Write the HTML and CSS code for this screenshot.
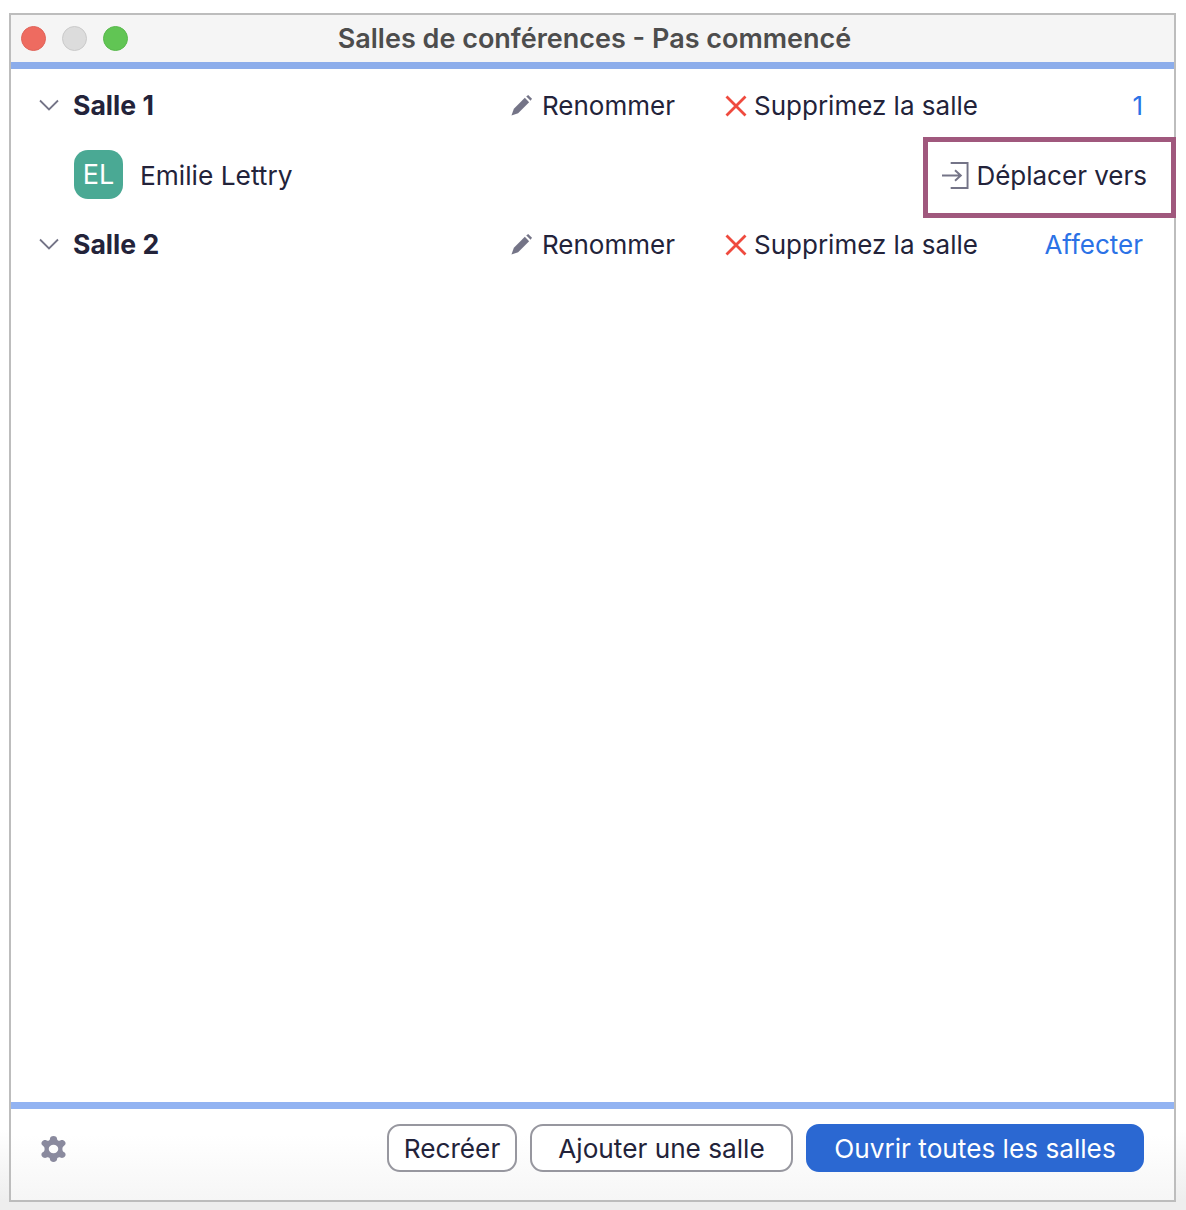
FILE: index.html
```html
<!DOCTYPE html>
<html lang="fr">
<head>
    <meta charset="UTF-8">
    <title>Salles de conférences</title>
    <link rel="stylesheet" href="styles.css">
</head>
<body>
    <div class="window">
        <div class="titlebar">
            <div class="lights">
                <span class="light red"></span>
                <span class="light grey"></span>
                <span class="light green"></span>
            </div>
            <div class="title">Salles de conférences - Pas commencé</div>
        </div>

        <div class="rooms">
            <!-- Salle 1 -->
            <div class="room-row">
                <svg class="chevron" viewBox="0 0 20 12"><path d="M1 1.5 L10 10.5 L19 1.5"/></svg>
                <div class="room-name">Salle 1</div>
                <div class="action rename">
                    <svg class="pencil" viewBox="0 0 22 22"><path d="M0.5 21.5 L3 14.5 L14.5 3 L19 7.5 L7.5 19 Z"/><path d="M16 1.5 L18 0 L22 4 L20.500 6 Z"/></svg>
                    <span>Renommer</span>
                </div>
                <div class="action delete">
                    <svg class="cross" viewBox="0 0 22 22"><path d="M1.500 1.500 L20.500 20.500 M20.500 1.500 L1.500 20.500"/></svg>
                    <span>Supprimez la salle</span>
                </div>
                <div class="room-link">1</div>
            </div>

            <div class="member-row">
                <div class="avatar">EL</div>
                <div class="member-name">Emilie Lettry</div>
                <div class="move">
                    <svg class="move-icon" viewBox="0 0 28 28"><path d="M9 1 H26.500 V27 H9 M0 14 H19 M13.500 8.500 L19.500 14 L13.500 19.500"/></svg>
                    <span>Déplacer vers</span>
                </div>
                <div class="highlight"></div>
            </div>

            <!-- Salle 2 -->
            <div class="room-row">
                <svg class="chevron" viewBox="0 0 20 12"><path d="M1 1.500 L10 10.500 L19 1.500"/></svg>
                <div class="room-name">Salle 2</div>
                <div class="action rename">
                    <svg class="pencil" viewBox="0 0 22 22"><path d="M0.500 21.500 L3 14.500 L14.500 3 L19 7.500 L7.500 19 Z"/><path d="M16 1.500 L18 0 L22 4 L20.500 6 Z"/></svg>
                    <span>Renommer</span>
                </div>
                <div class="action delete">
                    <svg class="cross" viewBox="0 0 22 22"><path d="M1.500 1.500 L20.500 20.500 M20.500 1.500 L1.500 20.500"/></svg>
                    <span>Supprimez la salle</span>
                </div>
                <div class="room-link">Affecter</div>
            </div>
        </div>

        <div class="footer">
            <svg class="gear" viewBox="2.500 0.500 21 25" preserveAspectRatio="none">
                <path fill-rule="evenodd" d="M13 0.500 C14.800 0.500 16 1.700 16 3.300 C16 4.700 17.500 5.500 18.700 4.800 C20.100 4 21.800 4.500 22.700 6 C23.600 7.500 23.100 9.200 21.700 10 C20.500 10.700 20.500 12.300 20.500 13 C20.500 13.700 20.500 15.300 21.700 16 C23.100 16.800 23.600 18.500 22.700 20 C21.800 21.500 20.100 22 18.700 21.200 C17.500 20.500 16 21.300 16 22.700 C16 24.300 14.800 25.500 13 25.500 C11.200 25.500 10 24.300 10 22.700 C10 21.300 8.500 20.500 7.300 21.200 C5.900 22 4.200 21.500 3.300 20 C2.400 18.500 2.900 16.800 4.300 16 C5.500 15.300 5.500 13.700 5.500 13 C5.500 12.300 5.500 10.700 4.300 10 C2.900 9.200 2.400 7.500 3.300 6 C4.200 4.500 5.900 4 7.300 4.800 C8.500 5.500 10 4.700 10 3.300 C10 1.700 11.200 0.500 13 0.500 Z M13 9 A4 4 0 1 0 13 17 A4 4 0 1 0 13 9 Z"/>
            </svg>
            <div class="buttons">
                <button class="btn recreate">Recréer</button>
                <button class="btn add">Ajouter une salle</button>
                <button class="btn primary">Ouvrir toutes les salles</button>
            </div>
        </div>
    </div>
</body>
</html>
```

FILE: styles.css
```css
html, body {
    margin: 0;
    height: 100%;
}

body {
    font-family: 'Inter', 'Liberation Sans', sans-serif;
    color: #23233a;
    background: linear-gradient(to bottom, #ffffff 0, #ffffff 1130px, #eeeeee 1200px);
    padding: 13px 10px 8px 9px;
    box-sizing: border-box;
    overflow: hidden;
}

.window {
    height: 1189px;
    border: 2px solid #bdbdbd;
    background: linear-gradient(to bottom, #ffffff 0, #ffffff 1120px, #f6f6f6 1185px);
    box-sizing: border-box;
    display: flex;
    flex-direction: column;
}

/* Title bar */
.titlebar {
    height: 47px;
    background: #f5f5f5;
    border-bottom: 7px solid #8cadeb;
    display: flex;
    align-items: center;
    position: relative;
    flex-shrink: 0;
}

.lights {
    display: flex;
    gap: 16px;
    margin-left: 10px;
}

.light {
    width: 25px;
    height: 25px;
    border-radius: 50%;
    box-sizing: border-box;
}

.light.red { background: #ee6b60; border: 1px solid #e0645a; }
.light.grey { background: #dcdcdc; border: 1px solid #cacaca; }
.light.green { background: #61c554; border: 1px solid #58b94c; }

.title {
    position: absolute;
    left: 0;
    right: 0;
    text-align: center;
    font-size: 27px;
    font-weight: 600;
    color: #4d4d4d;
    padding-left: 4px;
}

/* Rooms */
.rooms {
    flex: 1;
    padding-top: 2px;
}

.room-row {
    height: 69px;
    display: flex;
    align-items: center;
    padding: 0 31px 0 28px;
    font-size: 26px;
}

.chevron {
    width: 20px;
    height: 12px;
    fill: none;
    stroke: #747487;
    stroke-width: 1.8;
    margin-top: -2px;
}

.room-name {
    font-size: 26.6px;
    font-weight: 700;
    margin-left: 14px;
    margin-top: -2px;
    width: 438px;
}

.action {
    display: flex;
    align-items: center;
}

.rename {
    width: 214px;
}

.pencil {
    width: 21px;
    height: 21px;
    fill: #747487;
    margin-right: 10px;
}

.delete {
    flex: 1;
}

.cross {
    width: 22px;
    height: 22px;
    fill: none;
    stroke: #ef4a3e;
    stroke-width: 2.8;
    margin-right: 7px;
}

.room-link {
    color: #2b72e6;
}

.member-row {
    height: 70px;
    display: flex;
    align-items: center;
    padding: 0 27px 0 63px;
    font-size: 26px;
    position: relative;
}

.avatar {
    width: 49px;
    height: 49px;
    border-radius: 14px;
    background: #4aa994;
    color: #ffffff;
    display: flex;
    align-items: center;
    justify-content: center;
    font-size: 27px;
    flex-shrink: 0;
    margin-top: -2px;
}

.member-name {
    font-size: 26.3px;
    margin-left: 17px;
    flex: 1;
}

.move {
    display: flex;
    align-items: center;
}

.move-icon {
    width: 27px;
    height: 27px;
    fill: none;
    stroke: #747487;
    stroke-width: 2;
    margin-right: 7px;
}

/* box drawn over the row in the screenshot */
.highlight {
    position: absolute;
    left: 912px;
    top: -3px;
    width: 253px;
    height: 81px;
    border: 5px solid #a0587d;
    box-sizing: border-box;
}

/* Footer */
.footer {
    height: 98px;
    border-top: 7px solid #92b3f2;
    display: flex;
    align-items: center;
    justify-content: space-between;
    padding: 15px 30px 28px 30px;
    box-sizing: border-box;
    flex-shrink: 0;
}

.gear {
    width: 25px;
    height: 26px;
    fill: #8a8a9e;
    margin-top: 1px;
}

.buttons {
    display: flex;
    gap: 13px;
}

.btn {
    height: 48px;
    border-radius: 13px;
    border: 2px solid #97979f;
    background: #ffffff;
    font-family: inherit;
    font-size: 26.2px;
    color: #23233a;
    padding: 0;
    box-sizing: border-box;
}

.recreate { width: 130px; }
.add { width: 263px; }

.btn.primary {
    width: 338px;
    background: #2b68d2;
    border-color: #2b68d2;
    color: #ffffff;
}
```
